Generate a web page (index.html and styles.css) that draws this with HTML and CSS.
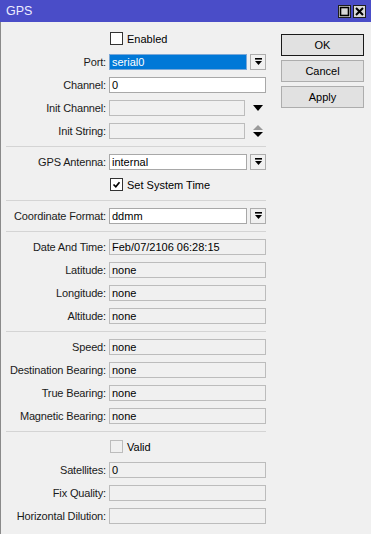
FILE: index.html
```html
<!DOCTYPE html>
<html>
<head>
<meta charset="utf-8">
<link rel="stylesheet" href="styles.css">
</head>
<body>
<div class="window">
  <div class="titlebar">
    <span class="title">GPS</span>
    <div class="tbtns">
      <span class="tbtn"><svg width="11" height="11" viewBox="0 0 11 11"><rect x="1.5" y="1.5" width="8" height="8" fill="none" stroke="#000" stroke-width="1.6"/></svg></span>
      <span class="tbtn"><svg width="11" height="11" viewBox="0 0 11 11"><path d="M2 2 L9 9 M9 2 L2 9" stroke="#000" stroke-width="2"/></svg></span>
    </div>
  </div>
  <div class="content">
    <div class="form">
      <div class="row"><span></span><label class="chk"><span class="box"></span>Enabled</label></div>
      <div class="row"><span class="lbl">Port:</span>
        <div class="combo"><span class="field sel">serial0</span><span class="dd"><svg width="9" height="9" viewBox="0 0 9 9"><rect x="1" y="1" width="7" height="1.6" fill="#000"/><path d="M1 4 H8 L4.5 8 Z" fill="#000"/></svg></span></div></div>
      <div class="row"><span class="lbl">Channel:</span><span class="field edit">0</span></div>
      <div class="row"><span class="lbl">Init Channel:</span>
        <div class="combo"><span class="field ro"></span><span class="arrow"><svg width="10" height="6" viewBox="0 0 10 6"><path d="M0 0 H10 L5 6 Z" fill="#000"/></svg></span></div></div>
      <div class="row"><span class="lbl">Init String:</span>
        <div class="combo"><span class="field ro"></span><span class="arrow"><svg width="10" height="12" viewBox="0 0 10 12"><path d="M0 5 H10 L5 0 Z" fill="#9a9a9a"/><path d="M0 7 H10 L5 12 Z" fill="#000"/></svg></span></div></div>
      <div class="sep"></div>
      <div class="row"><span class="lbl">GPS Antenna:</span>
        <div class="combo"><span class="field edit">internal</span><span class="dd"><svg width="9" height="9" viewBox="0 0 9 9"><rect x="1" y="1" width="7" height="1.6" fill="#000"/><path d="M1 4 H8 L4.5 8 Z" fill="#000"/></svg></span></div></div>
      <div class="row"><span></span><label class="chk"><span class="box"><svg width="9" height="9" viewBox="0 0 9 9"><path d="M1.5 4.5 L3.8 6.8 L7.5 2.2" fill="none" stroke="#000" stroke-width="1.7"/></svg></span>Set System Time</label></div>
      <div class="sep"></div>
      <div class="row"><span class="lbl">Coordinate Format:</span>
        <div class="combo"><span class="field edit">ddmm</span><span class="dd"><svg width="9" height="9" viewBox="0 0 9 9"><rect x="1" y="1" width="7" height="1.6" fill="#000"/><path d="M1 4 H8 L4.5 8 Z" fill="#000"/></svg></span></div></div>
      <div class="sep"></div>
      <div class="row"><span class="lbl">Date And Time:</span><span class="field ro">Feb/07/2106 06:28:15</span></div>
      <div class="row"><span class="lbl">Latitude:</span><span class="field ro">none</span></div>
      <div class="row"><span class="lbl">Longitude:</span><span class="field ro">none</span></div>
      <div class="row"><span class="lbl">Altitude:</span><span class="field ro">none</span></div>
      <div class="sep"></div>
      <div class="row"><span class="lbl">Speed:</span><span class="field ro">none</span></div>
      <div class="row"><span class="lbl">Destination Bearing:</span><span class="field ro">none</span></div>
      <div class="row"><span class="lbl">True Bearing:</span><span class="field ro">none</span></div>
      <div class="row"><span class="lbl">Magnetic Bearing:</span><span class="field ro">none</span></div>
      <div class="sep"></div>
      <div class="row"><span></span><label class="chk dis"><span class="box"></span>Valid</label></div>
      <div class="row"><span class="lbl">Satellites:</span><span class="field ro">0</span></div>
      <div class="row"><span class="lbl">Fix Quality:</span><span class="field ro"></span></div>
      <div class="row"><span class="lbl">Horizontal Dilution:</span><span class="field ro"></span></div>
    </div>
    <div class="buttons">
      <button class="btn default">OK</button>
      <button class="btn">Cancel</button>
      <button class="btn">Apply</button>
    </div>
  </div>
</div>
</body>
</html>
```
FILE: styles.css
```css
html, body {
  margin: 0;
  padding: 0;
  background: #f0f0f0;
}
body {
  font-family: "Liberation Sans", Arial, sans-serif;
  font-size: 11px;
  color: #000;
  width: 371px;
  height: 534px;
  overflow: hidden;
}
.window {
  display: flex;
  flex-direction: column;
  height: 534px;
}
.titlebar {
  height: 22px;
  background: #4a4dc8;
  display: flex;
  align-items: center;
  justify-content: space-between;
  padding: 0 5px 0 6px;
  flex: none;
}
.title {
  color: #ececff;
  font-size: 12.5px;
}
.tbtns {
  display: flex;
  gap: 2px;
}
.tbtn {
  width: 13px;
  height: 13px;
  box-sizing: border-box;
  border: 1px solid #1e1e1e;
  background: #d8d8d8;
  display: flex;
  align-items: center;
  justify-content: center;
}
.content {
  flex: 1;
  display: flex;
  gap: 15px;
  border-left: 1px solid #8a8a8a;
  padding-top: 5px;
}
.form {
  width: 265px;
  display: flex;
  flex-direction: column;
}
.row {
  display: grid;
  grid-template-columns: 105px 157px;
  column-gap: 3px;
  height: 23px;
  align-items: center;
}
.lbl {
  text-align: right;
  white-space: nowrap;
  color: #1a1a1a;
  letter-spacing: -0.15px;
}
.field {
  height: 16px;
  box-sizing: border-box;
  border: 1px solid #bdbdbd;
  padding: 0 2px;
  line-height: 14px;
  white-space: nowrap;
  overflow: hidden;
  display: block;
}
.field.ro {
  background: #f0f0f0;
  border-color: #bcbcbc;
}
.field.edit {
  background: #fff;
  border-color: #a8a8a8;
}
.field.sel {
  background: #0078d7;
  color: #fff;
  border-color: #7aa8d8;
}
.combo {
  display: flex;
  align-items: center;
  gap: 3px;
}
.combo .field {
  width: 138px;
}
.dd {
  width: 16px;
  height: 16px;
  box-sizing: border-box;
  border: 1px solid #adadad;
  background: #f0f0f0;
  display: flex;
  align-items: center;
  justify-content: center;
}
.arrow {
  width: 16px;
  height: 16px;
  display: flex;
  align-items: center;
  justify-content: center;
  padding-left: 2px;
}
.chk {
  display: flex;
  align-items: center;
  gap: 4px;
  padding-left: 1px;
}
.box {
  width: 13px;
  height: 13px;
  box-sizing: border-box;
  border: 1px solid #333;
  background: #fff;
  display: flex;
  align-items: center;
  justify-content: center;
}
.chk.dis .box {
  border-color: #bcbcbc;
  background: #f0f0f0;
}
.sep {
  height: 0;
  border-top: 1px solid #d4d4d4;
  margin: 4px 0 3px 5px;
  width: 260px;
}
.buttons {
  display: flex;
  flex-direction: column;
  gap: 4px;
  padding-top: 7px;
}
.btn {
  width: 83px;
  height: 22px;
  box-sizing: border-box;
  border: 1px solid #adadad;
  background: #e1e1e1;
  font-family: "Liberation Sans", Arial, sans-serif;
  font-size: 11px;
  color: #000;
  padding: 0;
}
.btn.default {
  border: 1px solid #1a1a1a;
}
```
